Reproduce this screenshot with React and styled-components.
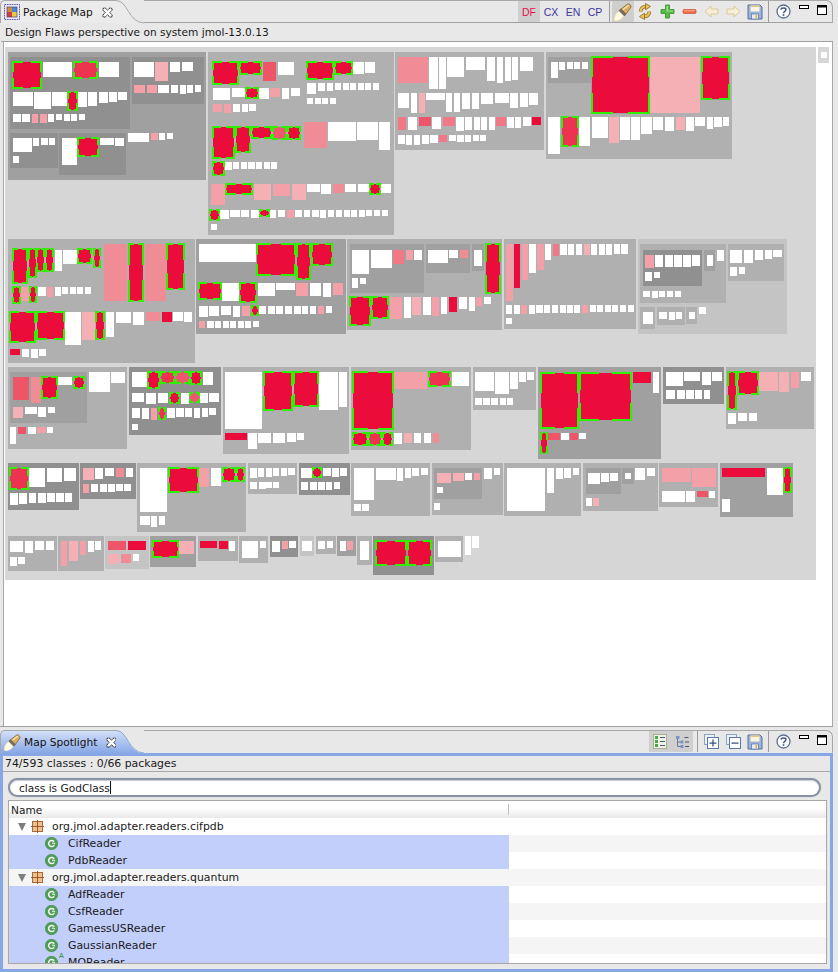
import React from "react";
import styled, { createGlobalStyle } from "styled-components";

const GlobalStyle = createGlobalStyle`
  html, body { margin: 0; padding: 0; background: #e8e8e8; overflow: hidden; }
  #root { width: 838px; height: 972px; }
`;

const FONT = `"DejaVu Sans", "Liberation Sans", sans-serif`;

const Window = styled.div`
  width: 838px;
  height: 972px;
  display: flex;
  flex-direction: column;
  background: #e8e8e8;
  font-family: ${FONT};
  font-size: 10px;
  color: #1a1a1a;
  overflow: hidden;
`;

const MapPane = styled.section`
  height: 726px;
  margin-right: 5px;
  display: flex;
  flex-direction: column;
  border-bottom: 1px solid #a0a0a0;
  box-sizing: content-box;
`;

const SpotPane = styled.section`
  height: 242px;
  margin-top: 3px;
  margin-right: 5px;
  display: flex;
  flex-direction: column;
`;

const TabBar = styled.header`
  height: 23px;
  display: flex;
  flex: none;
  align-items: stretch;
  position: relative;
`;

const Tab = styled.div`
  width: 116px;
  display: flex;
  align-items: center;
  gap: 3px;
  padding-left: 3px;
  box-sizing: border-box;
  border-top: 1px solid #a8a8a8;
  border-left: 1px solid #a8a8a8;
  border-top-left-radius: 5px;
  font-size: 10.6px;
  white-space: nowrap;
  background: ${(p) => (p.$active ? "linear-gradient(#d3e0f8, #87a7e6)" : "#ebebeb")};
`;

const TabTitle = styled.span`
  color: #111;
`;

const CloseIcon = styled.svg`
  width: 11px;
  height: 11px;
  margin-left: 6px;
  flex: none;
`;

const TabCurve = styled.svg`
  width: 28px;
  height: 24px;
  flex: none;
  position: relative;
  z-index: 1;
`;

const TabRest = styled.div`
  flex: 1;
  display: flex;
  justify-content: flex-end;
  align-items: stretch;
  border-top: 1px solid #a8a8a8;
  border-right: 1px solid #a8a8a8;
  border-top-right-radius: 7px;
  border-bottom: 1px solid ${(p) => (p.$active ? "transparent" : "#a0a0a0")};
`;

const ToolGroup = styled.div`
  display: flex;
  align-items: center;
  padding: 0 ${(p) => p.$right ?? p.$pad ?? 2}px 0 ${(p) => p.$pad ?? 2}px;
  border-right: ${(p) => (p.$sep ? "1px solid #9c9c9c" : "0")};
  height: 100%;
  box-sizing: border-box;
`;

const ToolButton = styled.button`
  width: ${(p) => p.$w ?? 22}px;
  height: 21px;
  padding: 0;
  margin: 0;
  border: 0;
  display: flex;
  align-items: center;
  justify-content: center;
  background: ${(p) => (p.$pressed ? "#cfcfcf" : "transparent")};
  border-radius: 1px;
  font-family: "Liberation Sans", sans-serif;
  font-size: 10.5px;
  color: ${(p) => p.$color ?? "#3a37a0"};
`;

const Body = styled.div`
  flex: 1;
  display: flex;
  flex-direction: column;
  min-height: 0;
  border-left: 1px solid #a8a8a8;
  margin-left: 3px;
`;

const Caption = styled.div`
  height: 18px;
  margin-left: -3px;
  flex: none;
  display: flex;
  align-items: center;
  padding-left: 4px;
  border-bottom: 1px solid #a0a0a0;
  background: #e8e8e8;
  white-space: nowrap;
  font-size: 10.6px;
`;

const MapArea = styled.div`
  flex: 1;
  background: #fff;
  padding: 5px 0 0 1px;
  display: flex;
  gap: 2px;
  border-right: 1px solid #a8a8a8;
  align-items: flex-start;
`;

const Treemap = styled.svg`
  width: 811px;
  height: 533px;
  flex: none;
  display: block;
`;

const ScrollThumb = styled.div`
  width: 11px;
  height: 16px;
  background: #d6d6d6;
  display: flex;
  align-items: center;
  justify-content: center;
  &::after {
    content: "";
    width: 6px;
    height: 6px;
    background: #fff;
  }
`;

const SpotBody = styled.div`
  flex: 1;
  display: flex;
  flex-direction: column;
  min-height: 0;
  border: 3px solid #86a6e6;
  background: #e8e8e8;
`;

const SpotCaption = styled.div`
  height: 13px;
  padding: 1px 0 1px 2px;
  flex: none;
  display: flex;
  align-items: center;
  font-size: 10.9px;
  white-space: nowrap;
  border-bottom: 1px solid #a8a8a8;
`;

const SearchBox = styled.div`
  height: 19px;
  margin: 6px 9px 0 5px;
  flex: none;
  box-sizing: border-box;
  border: 2px solid #8a93a5;
  border-radius: 10px;
  background: #fff;
  box-shadow: inset 0 1px 1px #c8ccd6, 0 0 1px #aab0bc;
  display: flex;
  align-items: center;
  padding-left: 9px;
  font-size: 10.6px;
  white-space: nowrap;
`;

const Caret = styled.span`
  width: 1px;
  height: 13px;
  background: #111;
`;

const Table = styled.div`
  flex: 1;
  min-height: 0;
  margin: 3px 3px 5px 5px;
  border: 1px solid #a8a8a8;
  background: #fff;
  overflow: hidden;
`;

const HeaderRow = styled.div`
  height: 17px;
  display: flex;
  align-items: center;
  background: linear-gradient(#fff 40%, #e9e9e9);
  font-size: 10.6px;
  &::after {
    content: "";
    width: 1px;
    height: 11px;
    background: #c0c0c0;
    order: 1;
  }
`;

const NameHead = styled.div`
  width: 499px;
  padding-left: 2px;
  box-sizing: border-box;
  flex: none;
`;

const Row = styled.div`
  height: 17px;
  display: flex;
  background: ${(p) => (p.$odd ? "#f5f5f5" : "#fff")};
`;

const NameCell = styled.div`
  width: 500px;
  flex: none;
  height: 100%;
  display: flex;
  align-items: center;
  box-sizing: border-box;
  white-space: nowrap;
  font-size: 10.9px;
  padding-left: ${(p) => (p.$cls ? 36 : 9)}px;
  background: ${(p) => (p.$cls ? "#c2cffa" : "transparent")};
`;

const Twist = styled.span`
  width: 0;
  height: 0;
  border-left: 4px solid transparent;
  border-right: 4px solid transparent;
  border-top: 8px solid #7d7d7d;
  flex: none;
  margin-right: 5px;
`;

const NodeIcon = styled.svg`
  width: 13px;
  height: 13px;
  flex: none;
  margin-right: 8px;
`;

const ClassGlyph = styled.svg`
  width: 13px;
  height: 13px;
  display: block;
`;

const ClassIconWrap = styled.span`
  position: relative;
  display: flex;
  flex: none;
  margin-right: 10px;
`;

const AbstractBadge = styled.span`
  position: absolute;
  left: 14px;
  top: -4px;
  font-size: 7px;
  color: #1a8a2a;
  line-height: 8px;
`;

const ViewGlyph = styled.svg`
  flex: none;
`;

const ArrowGlyph = styled.svg`
  transform: ${(p) => (p.$flip ? "scaleX(-1)" : "none")};
`;

const WinGlyph = styled.svg`
  align-self: flex-start;
  margin-top: 4px;
`;

const G = "#2ff000";
const COLORS = {
  9: "#909090",
  A: "#a0a0a0",
  B: "#b0b0b0",
  C: "#c4c4c4",
  W: "#ffffff",
  R: "#eb0c3c",
  a: "#f4b0b4",
  b: "#f4a0a8",
  c: "#f08c96",
  d: "#f27888",
  e: "#ef5568",
};
const HOT = { H: "#eb0c3c", J: "#ee3350", K: "#f0566e" };

const MAP = `
A 8 52 198 128;9 10 57 120 72;9 132 57 72 47;9 10 133 48 35;9 59 133 67 42;
H 12 61 30 28;W 43 62 29 15;J 73 61 25 18;W 99 62 20 15;W 13 92 20 14;W 34 92 17 17;W 52 92 15 14;H 67 91 11 20;W 78 92 9 15;W 88 92 9 14;W 99 92 9 11;W 109 92 8 10;W 118 92 9 8;
W 13 114 8 8;W 22 114 8 8;b 32 114 6 9;b 40 114 7 9;W 48 114 6 8;W 56 114 6 6;W 64 114 6 7;W 71 114 6 7;W 79 114 6 6;
W 134 62 20 15;a 155 62 13 19;W 170 62 10 10;W 182 62 11 9;b 134 85 11 8;b 147 85 10 8;W 158 85 11 8;W 171 85 7 8;W 180 85 6 9;W 187 85 6 8;W 195 85 6 7;
W 13 138 19 14;W 33 138 6 8;W 41 138 7 7;W 49 138 6 7;W 13 156 6 7;W 62 138 15 27;H 77 137 22 20;W 100 138 14 7;W 115 138 9 8;W 128 133 21 9;b 151 133 7 7;W 159 133 6 7;W 167 133 6 6;
B 208 52 186 183;
H 212 61 27 24;H 239 61 23 14;e 263 62 13 19;W 278 62 16 13;H 306 61 28 19;H 334 61 19 14;W 353 62 11 12;W 365 62 10 11;W 213 88 17 12;W 232 88 13 9;H 245 87 14 12;W 259 88 10 11;b 270 88 10 9;W 282 88 7 11;W 291 88 9 8;
W 307 83 9 11;W 318 83 7 8;W 327 83 6 8;W 335 83 6 7;W 343 83 6 7;W 350 83 6 7;W 358 83 6 7;W 365 83 6 7;W 373 83 6 7;W 307 98 6 6;W 315 98 6 6;W 322 98 6 6;W 330 98 6 6;b 213 104 9 8;b 224 104 7 9;W 233 104 7 8;W 242 104 6 8;W 249 104 7 7;
H 212 126 23 33;H 235 126 16 27;H 251 126 21 13;K 272 126 15 14;H 287 126 14 14;c 304 122 23 26;W 328 122 28 19;W 357 122 21 18;W 379 122 11 28;H 212 161 13 15;W 225 162 7 8;W 233 162 6 7;W 241 162 6 7;W 248 162 7 7;W 256 162 6 7;W 264 162 6 7;W 271 162 6 7;
b 211 184 14 21;H 225 183 28 12;a 254 184 17 16;b 273 184 17 12;a 292 184 14 16;W 307 184 13 8;W 321 184 10 10;c 333 184 11 9;W 345 184 11 8;W 358 184 11 8;H 369 183 12 12;W 381 184 10 9;
H 209 209 11 12;W 220 210 9 9;W 230 210 10 7;W 241 210 8 7;W 251 210 8 8;H 259 209 11 8;W 270 210 6 8;W 278 210 7 7;b 287 210 7 8;W 295 210 7 7;W 304 210 6 7;W 312 210 7 7;W 320 210 6 8;W 328 210 6 7;W 336 210 6 7;W 344 210 6 7;W 351 210 6 7;W 359 210 6 7;W 366 210 6 6;W 374 210 6 6;W 382 210 6 6;W 211 224 6 6;
B 395 52 149 98;
c 398 57 30 26;W 429 57 9 32;W 439 57 7 32;W 447 57 17 20;W 466 57 19 13;W 487 57 8 24;W 497 57 6 26;W 505 57 6 24;W 512 57 6 23;W 520 57 13 14;
W 398 93 11 15;W 411 93 6 20;a 419 93 6 20;W 426 93 19 7;W 446 93 6 19;W 454 93 6 19;W 462 93 8 16;W 472 93 7 16;W 481 93 12 11;W 495 93 14 10;W 510 93 8 15;W 520 93 8 14;W 529 93 9 12;
d 398 117 8 13;W 408 117 9 13;e 419 117 12 9;W 432 117 9 12;d 443 117 12 9;W 456 117 8 14;W 465 117 7 13;W 474 117 6 13;W 481 117 6 13;W 489 117 6 13;d 496 117 10 9;W 507 117 7 11;W 515 117 6 11;W 523 117 8 9;R 532 117 9 8;
W 398 135 7 9;W 406 135 6 10;W 414 135 6 10;W 422 135 7 9;W 430 135 8 8;d 439 135 8 7;W 449 135 7 6;W 457 135 7 7;W 465 135 6 7;W 473 135 6 6;W 480 135 6 6;
B 546 52 186 107;A 548 57 43 26;W 551 62 7 16;W 559 62 6 8;W 567 62 6 7;W 574 62 6 7;W 582 62 6 7;H 591 56 59 58;a 650 57 50 56;H 701 56 29 44;W 548 117 12 37;J 561 116 18 31;W 579 117 11 29;W 592 117 16 21;a 609 117 10 26;W 620 117 10 23;W 631 117 9 23;W 641 117 11 17;W 653 117 10 13;W 665 117 9 14;a 676 117 9 13;W 686 117 8 14;W 695 117 10 9;W 707 117 6 12;W 714 117 8 10;W 723 117 6 9;
B 8 239 187 124;
H 12 248 16 36;H 28 248 9 30;H 36 248 9 24;H 45 248 9 24;W 55 250 7 21;W 63 250 14 14;H 77 248 15 16;H 93 248 8 20;c 104 244 23 57;H 128 243 16 59;c 145 244 21 57;H 166 243 19 47;H 12 286 9 18;b 21 287 8 14;H 29 286 8 17;W 38 287 8 9;b 47 287 6 10;W 55 287 6 9;W 62 287 6 7;W 70 287 6 7;W 77 287 6 7;W 85 287 6 7;
H 9 311 27 32;H 36 311 29 29;W 65 312 16 33;a 82 312 13 28;H 95 311 10 29;W 106 312 8 25;W 116 312 15 11;W 133 312 11 13;c 146 312 14 9;R 162 312 10 10;W 173 312 10 9;W 184 312 8 10;R 10 349 10 6;W 22 349 7 8;W 31 349 7 9;W 39 349 7 7;
A 196 239 150 95;
W 199 244 57 18;H 256 243 40 33;H 296 243 15 37;H 311 243 22 23;H 198 282 24 18;W 222 283 17 18;H 239 282 18 21;W 258 283 17 13;W 276 283 19 7;b 296 283 12 13;W 310 283 11 13;W 323 283 8 14;b 333 283 10 12;
W 199 306 9 11;W 209 306 10 10;W 221 306 10 9;W 233 306 7 11;b 242 306 8 10;H 251 305 8 11;W 259 306 7 8;W 268 306 7 8;W 276 306 7 8;W 285 306 7 8;W 294 306 7 8;W 302 306 6 8;W 310 306 6 8;b 318 306 6 8;W 326 306 6 7;
b 199 321 6 7;W 207 321 7 7;W 215 321 6 7;W 223 321 6 7;W 230 321 6 7;W 238 321 6 7;W 245 321 6 7;W 253 321 6 6;
B 347 239 155 91;A 350 244 74 49;W 352 250 17 24;W 371 250 21 18;d 393 250 11 14;b 406 250 7 10;W 414 250 8 10;W 352 278 6 10;W 360 278 6 6;A 426 244 44 29;W 428 250 20 13;W 449 250 9 8;c 460 250 8 8;A 472 244 12 27;W 474 250 8 16;H 485 243 16 51;
H 349 296 22 30;H 371 296 18 23;b 390 297 12 22;W 404 297 7 21;a 412 297 9 18;W 423 297 8 18;b 432 297 7 19;W 441 297 6 17;R 449 297 8 15;W 459 297 8 12;W 469 297 6 14;b 476 297 6 9;W 484 297 7 7;
B 504 239 132 90;
b 506 244 7 57;R 514 244 6 44;b 522 244 6 36;W 529 244 7 29;b 537 244 7 26;W 545 244 6 16;d 553 244 6 12;W 560 244 7 11;W 568 244 6 11;W 576 244 6 11;a 584 244 6 11;W 591 244 6 11;W 599 244 6 11;W 606 244 6 11;W 614 244 6 10;W 621 244 7 10;
W 506 305 6 9;W 514 305 6 9;b 521 305 6 9;W 529 305 6 9;W 536 305 7 8;W 544 305 6 8;W 552 305 6 8;W 560 305 6 8;W 567 305 6 8;W 574 305 6 8;b 582 305 6 8;W 590 305 6 7;W 597 305 6 7;W 605 305 6 7;W 612 305 6 7;W 620 305 6 7;W 628 305 6 7;W 506 318 6 6;
C 638 239 149 95;B 640 244 86 59;9 643 250 59 36;b 645 255 9 13;W 655 255 8 12;W 665 255 8 12;W 674 255 8 12;W 683 255 8 12;W 692 255 8 11;W 645 272 7 9;W 654 272 6 6;W 643 291 7 6;W 652 291 6 7;W 659 291 6 6;W 667 291 6 6;W 675 291 6 6;A 704 250 11 21;W 707 255 6 11;W 717 250 7 11;
B 728 244 56 37;W 730 250 12 13;W 744 250 9 13;W 755 250 8 10;W 765 250 7 9;W 773 250 9 7;W 730 267 7 9;W 739 267 6 7;
B 640 307 15 22;W 643 312 10 12;B 657 307 28 18;W 659 312 8 7;W 669 312 6 8;W 676 312 6 7;B 686 307 11 17;W 689 312 6 7;W 699 307 7 7;
B 8 367 119 82;A 10 372 77 51;e 13 377 16 23;c 31 377 10 26;H 41 376 17 23;W 58 377 14 8;H 73 376 12 13;a 13 407 10 11;W 25 407 12 7;W 38 407 8 10;W 48 407 7 6;W 10 427 6 17;e 18 427 8 7;W 28 427 8 7;b 37 427 9 6;W 47 427 6 6;W 89 372 21 20;W 111 372 14 11;
9 129 367 92 68;W 132 372 15 15;H 147 371 13 18;J 160 371 15 13;K 175 371 15 13;H 190 371 12 14;W 203 372 10 13;W 132 393 12 9;W 146 393 10 11;W 158 393 10 10;H 169 392 11 12;W 181 393 8 11;K 189 392 11 11;W 200 393 8 10;W 209 393 10 9;W 132 408 8 10;W 142 408 7 11;b 151 408 6 12;J 158 407 8 13;W 167 408 8 10;W 176 408 8 9;W 185 408 7 9;W 194 408 6 10;W 202 408 6 9;W 209 408 7 7;W 132 424 6 6;
B 223 367 126 87;W 225 372 37 57;H 263 371 30 40;H 293 371 26 36;W 319 372 19 38;W 339 372 8 35;R 225 433 22 7;W 248 433 9 16;W 258 433 13 10;W 273 433 12 10;W 287 433 9 9;W 297 433 7 7;
B 351 367 120 83;H 352 371 42 59;b 394 372 33 17;J 428 371 23 16;W 452 372 17 14;H 352 432 16 14;J 368 432 14 14;H 382 432 11 14;W 394 433 8 11;a 404 433 8 10;W 414 433 7 10;W 424 433 7 10;c 433 433 6 10;
B 473 367 63 43;W 475 372 19 19;W 495 372 14 22;W 510 372 8 17;W 519 372 7 10;W 527 372 7 8;W 475 398 7 7;W 483 398 7 7;W 491 398 7 7;W 500 398 6 7;W 507 398 6 7;
A 538 367 123 92;H 540 372 39 57;H 579 372 53 49;R 633 372 18 11;W 653 372 6 21;H 540 432 8 22;e 548 433 12 7;W 561 433 8 7;e 570 433 8 7;W 579 433 7 6;
9 663 367 61 37;W 666 372 17 14;W 684 372 16 9;W 702 372 9 13;W 712 372 10 9;W 666 390 9 9;W 677 390 8 9;W 686 390 8 9;W 695 390 7 9;W 704 390 6 9;
B 726 367 88 62;H 727 371 10 39;H 737 371 22 24;a 759 372 19 19;a 779 372 10 20;b 791 372 8 16;W 801 372 10 9;W 728 413 8 11;W 738 413 9 8;W 749 413 8 8;
9 8 463 71 47;J 9 467 20 23;W 29 468 16 19;W 47 468 15 14;W 64 468 12 13;W 10 493 8 12;W 19 493 8 11;W 29 493 7 10;W 38 493 8 10;W 47 493 8 9;W 56 493 8 9;W 65 493 7 9;
9 80 463 56 36;a 83 468 11 12;W 95 468 8 11;W 105 468 9 8;c 116 468 8 9;W 126 468 7 9;b 83 484 6 9;W 91 484 7 8;W 100 484 7 8;W 108 484 7 8;W 116 484 7 7;W 124 484 7 7;
B 137 463 109 69;W 140 468 27 44;H 168 467 31 26;b 199 468 10 19;W 211 468 10 18;H 222 467 14 15;H 236 467 9 15;W 140 516 10 9;W 151 516 6 11;W 159 516 6 9;
B 248 463 49 31;W 250 468 7 10;W 258 468 6 9;W 266 468 6 9;W 273 468 6 8;W 281 468 6 8;W 288 468 7 7;W 250 482 7 7;W 259 482 7 7;W 266 482 6 6;W 273 482 6 6;
9 299 463 51 32;W 301 468 11 10;H 312 467 10 11;W 323 468 8 8;W 332 468 7 9;W 340 468 7 8;W 301 482 7 8;W 310 482 7 8;W 318 482 7 8;W 326 482 6 8;W 334 482 6 7;
B 351 463 79 53;W 354 468 20 32;W 376 468 20 12;W 397 468 6 13;W 405 468 6 10;W 412 468 7 8;W 421 468 7 7;W 354 504 7 7;W 362 504 7 7;
B 432 463 71 52;A 434 468 48 31;a 437 473 14 10;a 453 473 11 8;W 465 473 7 7;b 474 473 6 7;W 437 487 6 6;W 484 468 8 11;W 494 468 6 7;W 434 503 6 7;
B 504 463 77 53;W 507 468 38 43;W 547 468 7 25;W 556 468 7 11;W 564 468 7 10;W 573 468 6 7;
B 583 463 75 48;A 586 468 35 26;W 588 473 12 11;W 601 473 8 9;W 610 473 8 8;A 622 468 12 16;W 625 473 6 6;W 635 468 10 12;W 647 468 8 8;W 586 498 6 8;a 593 498 6 8;
B 659 463 59 44;b 662 468 29 14;b 692 468 24 19;W 662 491 23 11;W 686 491 9 11;e 697 491 11 6;W 709 491 6 7;
A 720 463 73 54;R 722 468 43 9;W 767 468 16 27;H 783 467 9 26;W 722 499 8 13;
B 8 536 49 35;W 10 541 13 11;W 25 541 8 12;W 35 541 9 9;W 46 541 8 9;W 10 557 7 9;W 18 557 7 7;
B 58 536 46 35;b 61 541 6 25;a 69 541 9 20;b 80 541 6 14;W 88 541 6 11;W 95 541 6 9;
C 105 536 44 33;e 108 541 18 9;R 128 541 18 9;a 108 554 11 10;c 121 554 10 9;W 133 554 6 7;
A 150 536 46 31;H 152 540 27 18;a 179 541 15 13;
B 198 536 40 25;R 200 541 17 7;R 219 541 9 8;W 229 541 6 10;
B 239 536 29 27;W 242 541 16 17;W 260 541 6 7;
9 270 536 28 21;W 272 541 8 11;b 282 541 6 8;W 289 541 7 7;
C 300 536 14 20;W 302 541 10 10;
B 316 536 20 18;W 318 541 7 8;W 327 541 6 7;
A 337 536 19 20;W 340 541 6 10;b 347 541 6 9;
B 357 536 15 29;W 360 541 9 19;
9 373 536 61 39;H 375 540 32 26;H 407 540 25 26;
B 435 536 28 26;W 438 541 23 16;W 465 536 6 19;W 472 536 7 12
`
  .split(";")
  .map((s) => s.trim().split(/\s+/))
  .map(([k, x, y, w, h]) => ({ k, x: +x, y: +y, w: +w, h: +h }));

function Hotspot({ x, y, w, h, fill, base }) {
  const armX = Math.max(3, Math.ceil(w * 0.36));
  const armY = Math.max(3, Math.ceil(h * 0.36));
  const gapX = w - 2 * armX;
  const gapY = h - 2 * armY;
  return (
    <g>
      <rect x={x} y={y} width={w} height={h} fill={G} />
      <rect x={x + 2} y={y + 2} width={w - 4} height={h - 4} fill={fill} />
      {gapX > 0 && (
        <>
          <rect x={x + armX} y={y + 1} width={gapX} height={h - 2} fill={fill} />
          <rect x={x + armX} y={y} width={gapX} height={1} fill={base} />
          <rect x={x + armX} y={y + h - 1} width={gapX} height={1} fill={base} />
        </>
      )}
      {gapY > 0 && (
        <>
          <rect x={x + 1} y={y + armY} width={w - 2} height={gapY} fill={fill} />
          <rect x={x} y={y + armY} width={1} height={gapY} fill={base} />
          <rect x={x + w - 1} y={y + armY} width={1} height={gapY} fill={base} />
        </>
      )}
    </g>
  );
}

function MapChart() {
  let base = "#b0b0b0";
  return (
    <Treemap viewBox="5 47 811 533" shapeRendering="crispEdges">
      <rect x="5" y="47" width="811" height="533" fill="#d6d6d6" />
      {MAP.map((n, i) => {
        if (HOT[n.k]) {
          return <Hotspot key={i} x={n.x} y={n.y} w={n.w} h={n.h} fill={HOT[n.k]} base={base} />;
        }
        if ("9ABC".includes(n.k)) base = COLORS[n.k];
        return <rect key={i} x={n.x} y={n.y} width={n.w} height={n.h} fill={COLORS[n.k]} />;
      })}
    </Treemap>
  );
}

const Close = () => (
  <CloseIcon viewBox="0 0 11 11">
    <path d="M1 1.5 L3 .8 L5.5 3.2 L8 .8 L10 1.5 L10.2 3 L7.8 5.5 L10.2 8 L10 9.8 L8 10.2 L5.5 7.8 L3 10.2 L1 9.8 L.8 8 L3.2 5.5 L.8 3 Z" fill="#fff" stroke="#222" strokeWidth="1" strokeDasharray="1.5 .4" />
  </CloseIcon>
);

const MapIcon = () => (
  <ViewGlyph width="16" height="16" viewBox="0 0 16 16">
    <rect x=".5" y=".5" width="15" height="15" fill="#ece8f4" stroke="#5a5ab0" strokeDasharray="1.6 .8" />
    <rect x="3" y="3" width="5" height="5" fill="#d88a3a" />
    <rect x="8" y="3" width="5" height="5" fill="#4a88d0" />
    <rect x="3" y="8" width="5" height="5" fill="#d03a4a" />
    <rect x="8" y="8" width="5" height="5" fill="#e8c840" />
    <rect x="3" y="3" width="10" height="10" fill="none" stroke="#444a70" strokeWidth=".7" />
  </ViewGlyph>
);

const Flashlight = ({ size = 18 }) => (
  <ViewGlyph width={size} height={size} viewBox="0 0 18 18">
    <path d="M0 17 C0 13 2 10 5 8 L10 13 C8 16 5 18 1 18 Z" fill="#fffbe6" stroke="#e6d49a" strokeWidth=".6" />
    <path d="M5 7.5 L10.5 13 L12 11 L7 6 Z" fill="#77706a" stroke="#4a443e" strokeWidth=".5" />
    <path d="M7 6 L14 .8 C15 .4 17.4 2.8 17 4 L12 11 Z" fill="#dcae62" stroke="#80602a" strokeWidth=".8" />
    <path d="M9 6.5 L14.6 2.2" stroke="#f8e8b8" strokeWidth="1.3" fill="none" />
  </ViewGlyph>
);

const SyncIcon = () => (
  <ViewGlyph width="16" height="17" viewBox="0 0 16 17">
    <g fill="none" strokeLinecap="butt">
      <path d="M9 3.5 C6 3.5 4 5 3.5 8.5" stroke="#8a6a1e" strokeWidth="3.6" />
      <path d="M9 3.5 C6 3.5 4 5 3.5 8.5" stroke="#eec05a" strokeWidth="2.2" />
      <path d="M7 13.5 C10 13.5 12 12 12.5 8.5" stroke="#8a6a1e" strokeWidth="3.6" />
      <path d="M7 13.5 C10 13.5 12 12 12.5 8.5" stroke="#eec05a" strokeWidth="2.2" />
    </g>
    <path d="M8.5 .5 L13.5 3.5 L8.5 6.8 Z" fill="#eec05a" stroke="#8a6a1e" strokeWidth=".8" strokeLinejoin="round" />
    <path d="M7.5 10.2 L2.5 13.5 L7.5 16.5 Z" fill="#eec05a" stroke="#8a6a1e" strokeWidth=".8" strokeLinejoin="round" />
  </ViewGlyph>
);

const PlusIcon = () => (
  <ViewGlyph width="15" height="15" viewBox="0 0 15 15">
    <path d="M5.5 1 H9.5 V5.5 H14 V9.5 H9.5 V14 H5.5 V9.5 H1 V5.5 H5.5 Z" fill="#55bb44" stroke="#3a8a30" strokeWidth=".8" />
    <path d="M6.5 2 H8 V6.5 H13 V7.5 H6.5 Z" fill="#9be08c" />
  </ViewGlyph>
);

const MinusIcon = () => (
  <ViewGlyph width="15" height="15" viewBox="0 0 15 15">
    <rect x="1" y="5.5" width="13" height="4" rx="1" fill="#ee6a4a" stroke="#d05030" strokeWidth=".7" />
    <rect x="2" y="6.3" width="11" height="1" fill="#f8b090" />
  </ViewGlyph>
);

const ArrowIcon = ({ flip }) => (
  <ArrowGlyph width="15" height="13" viewBox="0 0 15 13" $flip={flip}>
    <path d="M1 6.5 L7 1 V4 H14 V9 H7 V12 Z" fill="#f6eed8" stroke="#dcc898" strokeWidth="1" strokeLinejoin="round" />
  </ArrowGlyph>
);

const SaveIcon = () => (
  <ViewGlyph width="16" height="16" viewBox="0 0 16 16">
    <path d="M1 1 H13 L15 3 V15 H1 Z" fill="#9fb4d8" stroke="#54709e" />
    <rect x="3.5" y="1.5" width="9" height="6" fill="#faf4e0" />
    <rect x="3.5" y="1.5" width="9" height="1.4" fill="#e8c078" />
    <rect x="4.5" y="10" width="7" height="5" fill="#e8edf5" stroke="#54709e" strokeWidth=".7" />
    <rect x="8.5" y="11" width="1.6" height="3" fill="#e0b050" />
  </ViewGlyph>
);

const HelpIcon = () => (
  <ViewGlyph width="15" height="15" viewBox="0 0 15 15">
    <circle cx="7.5" cy="7.5" r="6.5" fill="#fbfcfe" stroke="#5e7090" strokeWidth="1.3" />
    <path d="M5 5.6 C5.2 3.6 9.9 3.3 10 5.6 C10 7.4 7.5 7.3 7.5 9.2" fill="none" stroke="#46587a" strokeWidth="1.4" />
    <rect x="6.7" y="10.2" width="1.6" height="1.7" fill="#46587a" />
  </ViewGlyph>
);

const WinMin = () => (
  <WinGlyph width="10" height="4" viewBox="0 0 10 4">
    <rect x=".5" y=".5" width="9" height="3" fill="#fff" stroke="#000" />
  </WinGlyph>
);

const WinMax = () => (
  <WinGlyph width="10" height="10" viewBox="0 0 10 10">
    <rect x=".5" y=".5" width="9" height="9" fill="#fff" stroke="#000" />
    <rect x="1" y="1" width="8" height="1.5" fill="#000" />
  </WinGlyph>
);

const ListIcon = () => (
  <ViewGlyph width="14" height="15" viewBox="0 0 14 15">
    <rect x=".5" y=".5" width="13" height="14" fill="#eef2e4" stroke="#a8b090" />
    {[2, 6, 10].map((y) => (
      <g key={y}>
        <rect x="2" y={y} width="3" height="3" fill="#48a848" />
        <rect x="7" y={y + 1} width="5" height="1" fill="#4a5a78" />
      </g>
    ))}
  </ViewGlyph>
);

const TreeToolIcon = () => (
  <ViewGlyph width="14" height="14" viewBox="0 0 14 14">
    <path d="M2.5 3 V11.5 H6 M2.5 7 H6" fill="none" stroke="#6a7a98" />
    <rect x="1" y="1" width="3.5" height="3" fill="#7a96c8" />
    <rect x="5.5" y="5.5" width="3" height="3" fill="#7a96c8" />
    <rect x="5.5" y="10" width="3" height="3" fill="#7a96c8" />
    <rect x="9.5" y="2" width="4" height="1" fill="#556" />
    <rect x="10" y="6.5" width="4" height="1" fill="#556" />
    <rect x="10" y="11" width="4" height="1" fill="#556" />
  </ViewGlyph>
);

const StackIcon = ({ plus }) => (
  <ViewGlyph width="15" height="15" viewBox="0 0 15 15">
    <rect x=".5" y=".5" width="10" height="10" fill="#eef2f8" stroke="#8ea2c4" />
    <rect x="3.5" y="3.5" width="11" height="11" fill="#fff" stroke="#5a78a8" />
    <rect x="5.5" y="8.5" width="7" height="1.2" fill="#2a4a80" />
    {plus && <rect x="8.4" y="5.5" width="1.2" height="7" fill="#2a4a80" />}
  </ViewGlyph>
);

const PackageIcon = () => (
  <NodeIcon viewBox="0 0 13 13">
    <rect x="1.5" y="1.5" width="10" height="10" fill="#f0c090" stroke="#a86a38" />
    <path d="M6.5 0 V13 M0 6.5 H13" stroke="#a05a28" strokeWidth="1" />
  </NodeIcon>
);

const ClassIcon = () => (
  <ClassGlyph viewBox="0 0 13 13">
    <circle cx="6.5" cy="6.5" r="6.2" fill="#4f9f55" stroke="#3a8642" strokeWidth=".6" />
    <path d="M9.2 4.6 A3.1 3.1 0 1 0 9.2 8.4" fill="none" stroke="#fff" strokeWidth="1.5" />
    <path d="M7 6.2 H9.6 V7.4" fill="none" stroke="#fff" strokeWidth="1" />
  </ClassGlyph>
);

const RightTools = ({ spot }) => (
  <>
    {spot ? (
      <>
        <ToolGroup $pad={0}>
          <ToolButton $pressed><ListIcon /></ToolButton>
          <ToolButton $pressed><TreeToolIcon /></ToolButton>
        </ToolGroup>
        <ToolGroup $pad={2} $sep />
        <ToolGroup $pad={2} $sep>
          <ToolButton><StackIcon plus /></ToolButton>
          <ToolButton><StackIcon /></ToolButton>
          <ToolButton><SaveIcon /></ToolButton>
        </ToolGroup>
      </>
    ) : (
      <>
        <ToolGroup $pad={0} $right={3} $sep>
          <ToolButton $pressed $color="#e8104a">DF</ToolButton>
          <ToolButton>CX</ToolButton>
          <ToolButton>EN</ToolButton>
          <ToolButton>CP</ToolButton>
        </ToolGroup>
        <ToolGroup $pad={2} $sep>
          <ToolButton $pressed><Flashlight /></ToolButton>
          <ToolButton><SyncIcon /></ToolButton>
          <ToolButton><PlusIcon /></ToolButton>
          <ToolButton><MinusIcon /></ToolButton>
          <ToolButton><ArrowIcon /></ToolButton>
          <ToolButton><ArrowIcon flip /></ToolButton>
          <ToolButton><SaveIcon /></ToolButton>
        </ToolGroup>
      </>
    )}
    <ToolGroup $pad={3} $right={2}>
      <ToolButton><HelpIcon /></ToolButton>
      <ToolButton $w={20}><WinMin /></ToolButton>
      <ToolButton $w={16}><WinMax /></ToolButton>
    </ToolGroup>
  </>
);

const TabEnd = ({ fill, id }) => (
  <TabCurve viewBox="0 0 28 24">
    {id && (
      <defs>
        <linearGradient id={id} x1="0" y1="0" x2="0" y2="1">
          <stop offset="0" stopColor="#d3e0f8" />
          <stop offset="1" stopColor="#87a7e6" />
        </linearGradient>
      </defs>
    )}
    <path d="M0 .5 C12 .5 12 22.5 27 23 L28 24 L0 24 Z" fill={id ? `url(#${id})` : fill} />
    <path d="M0 .5 C12 .5 12 22.5 28 23" fill="none" stroke={id ? "#8ca6d8" : "#a8a8a8"} />
  </TabCurve>
);

const ROWS = [
  { pkg: "org.jmol.adapter.readers.cifpdb" },
  { name: "CifReader" },
  { name: "PdbReader" },
  { pkg: "org.jmol.adapter.readers.quantum" },
  { name: "AdfReader" },
  { name: "CsfReader" },
  { name: "GamessUSReader" },
  { name: "GaussianReader" },
  { name: "MOReader", abs: true },
];

export default function App() {
  return (
    <Window>
      <GlobalStyle />
      <MapPane>
        <TabBar>
          <Tab>
            <MapIcon />
            <TabTitle>Package Map</TabTitle>
            <Close />
          </Tab>
          <TabEnd fill="#ebebeb" />
          <TabRest>
            <RightTools />
          </TabRest>
        </TabBar>
        <Body>
          <Caption>Design Flaws perspective on system jmol-13.0.13</Caption>
          <MapArea>
            <MapChart />
            <ScrollThumb />
          </MapArea>
        </Body>
      </MapPane>
      <SpotPane>
        <TabBar>
          <Tab $active>
            <Flashlight size={17} />
            <TabTitle>Map Spotlight</TabTitle>
            <Close />
          </Tab>
          <TabEnd id="spotTab" />
          <TabRest $active>
            <RightTools spot />
          </TabRest>
        </TabBar>
        <SpotBody>
          <SpotCaption>74/593 classes : 0/66 packages</SpotCaption>
          <SearchBox>
            class is GodClass
            <Caret />
          </SearchBox>
          <Table>
            <HeaderRow>
              <NameHead>Name</NameHead>
            </HeaderRow>
            {ROWS.map((r, i) => (
              <Row key={i} $odd={i % 2 === 1}>
                {r.pkg ? (
                  <NameCell>
                    <Twist />
                    <PackageIcon />
                    {r.pkg}
                  </NameCell>
                ) : (
                  <NameCell $cls>
                    <ClassIconWrap>
                      <ClassIcon />
                      {r.abs && <AbstractBadge>A</AbstractBadge>}
                    </ClassIconWrap>
                    {r.name}
                  </NameCell>
                )}
              </Row>
            ))}
          </Table>
        </SpotBody>
      </SpotPane>
    </Window>
  );
}
